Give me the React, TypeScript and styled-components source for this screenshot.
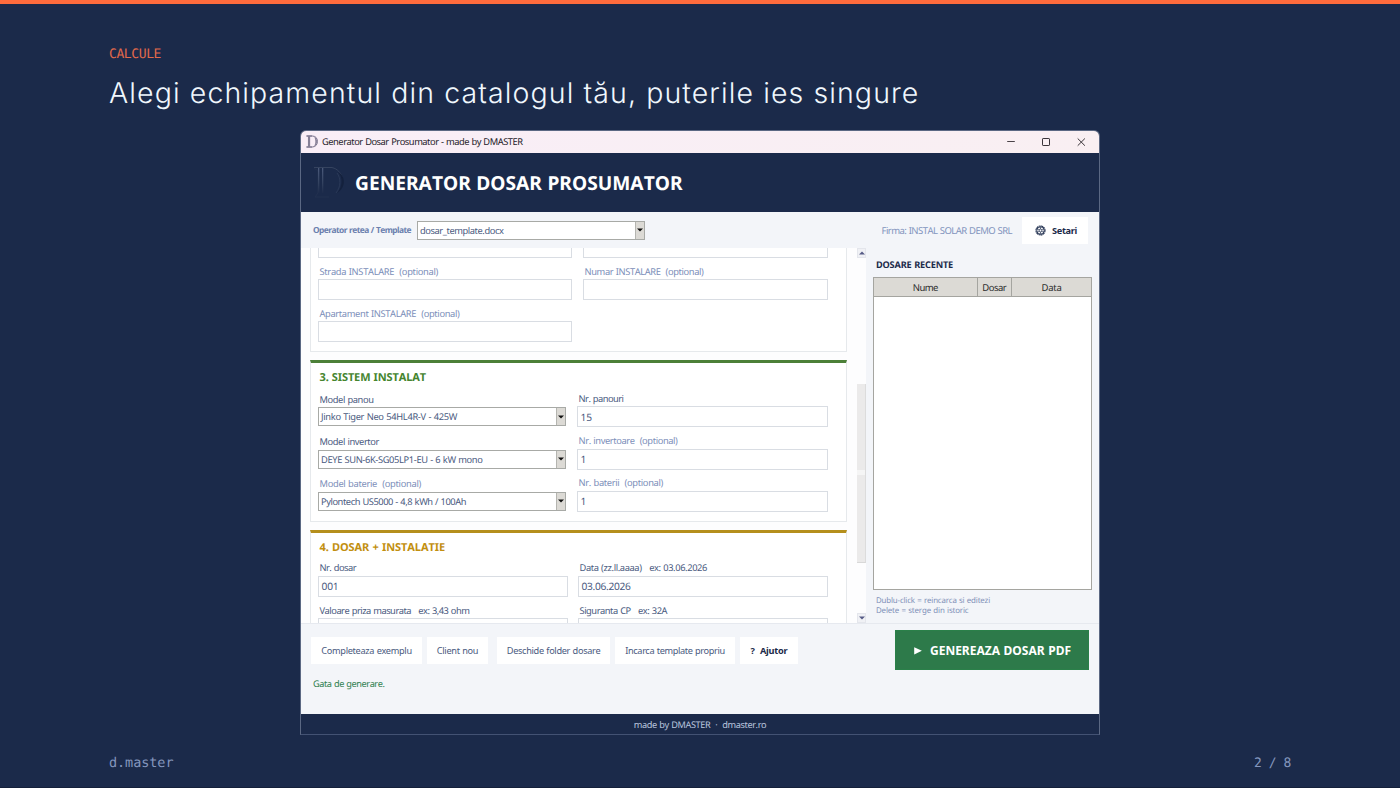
import React, { useLayoutEffect, useRef, useState } from "react";
import styled, { createGlobalStyle, css } from "styled-components";

const navy = "#1b2a4a";
const panel = "#f3f5f9";
const ink = "#4a5a80";
const muted = "#7b8eb9";

const GlobalStyle = createGlobalStyle`
  * { box-sizing: border-box; }
  body {
    margin: 0;
    background: ${navy};
    font-family: "Noto Sans", "Open Sans", sans-serif;
    text-rendering: geometricPrecision;
  }
`;

/* ---------- tracked text ---------- */

const TextSpan = styled.span`
  display: inline-block;
  white-space: pre;
  flex: none;
`;

/** Spreads or tightens the tracking so that the text spans `width` pixels. */
function Tracked({ width, children }: { width: number; children: string }) {
  const ref = useRef<HTMLSpanElement>(null);
  const [spacing, setSpacing] = useState(0);
  useLayoutEffect(() => {
    const el = ref.current;
    if (!el) return;
    el.style.letterSpacing = "0px";
    const natural = el.getBoundingClientRect().width;
    const next = (width - natural) / children.length;
    el.style.letterSpacing = `${next}px`;
    setSpacing(next);
  }, [width, children]);
  return (
    <TextSpan ref={ref} style={{ letterSpacing: `${spacing}px` }}>
      {children}
    </TextSpan>
  );
}

/* ---------- slide ---------- */

const Slide = styled.div`
  width: 1400px;
  height: 788px;
  overflow: hidden;
  display: flex;
  flex-direction: column;
  background: ${navy};
  border-top: 4px solid #ff6b3d;
  border-bottom: 1px solid #14203a;
`;

const SlideHead = styled.header`
  height: 126px;
  flex: none;
  padding: 43px 109px 0;
  display: flex;
  flex-direction: column;
`;

const Eyebrow = styled.div`
  height: 16px;
  line-height: 16px;
  font-family: "DejaVu Sans Mono", monospace;
  font-size: 13px;
  color: #e2694a;
`;

const Headline = styled.h1`
  margin: 12px 0 0;
  height: 36px;
  line-height: 36px;
  font-family: Inter, sans-serif;
  font-weight: 300;
  font-size: 28.5px;
  color: #f0f7fd;
`;

const SlideFoot = styled.footer`
  flex: 1;
  display: flex;
  justify-content: space-between;
  padding: 19px 109px 0 109px;
  font-family: "DejaVu Sans Mono", monospace;
  line-height: 19px;
  font-size: 13.5px;
  color: #8496bd;
`;

const PageNumber = styled.span`
  font-size: 13px;
`;

/* ---------- window ---------- */

const Window = styled.section`
  width: 800px;
  height: 605px;
  flex: none;
  margin-left: 300px;
  border: 1px solid #5b6883;
  border-bottom-color: #435273;
  border-radius: 6px 6px 0 0;
  overflow: hidden;
  display: flex;
  flex-direction: column;
  word-spacing: 0.03em;
  font-kerning: none;
`;

const TitleBar = styled.div`
  height: 22px;
  flex: none;
  display: flex;
  align-items: center;
  padding: 0 13px 1px 5px;
  background: linear-gradient(90deg, #f9eef7, #f9eff2);
  color: #252129;
  font-size: 9.3px;
`;

const TitleText = styled.div`
  flex: 1;
  padding-left: 4px;
`;

const WindowButtons = styled.div`
  display: flex;
  gap: 25px;
`;

const AppHeader = styled.div`
  height: 59px;
  flex: none;
  display: flex;
  align-items: center;
  gap: 8px;
  padding: 1px 12px 0;
  background: ${navy};
  color: #fff;
  font-weight: 700;
  font-size: 19.2px;
  line-height: 26px;
`;

const Toolbar = styled.div`
  height: 36px;
  flex: none;
  display: flex;
  align-items: center;
  padding: 0 11px 0 12px;
  background: ${panel};
`;

const ToolbarLabel = styled.label`
  width: 104px;
  padding-top: 1px;
  font-size: 8.4px;
  font-weight: 700;
  color: #6b80ae;
`;

const Company = styled.div`
  margin-left: auto;
  margin-right: 10px;
  font-size: 9.5px;
  color: #8294bd;
`;

const Button = styled.button<{ $width: number; $strong?: boolean }>`
  width: ${(p) => p.$width}px;
  height: 27px;
  flex: none;
  border: 0;
  padding: 0;
  display: flex;
  align-items: center;
  justify-content: center;
  gap: 6px;
  background: #fff;
  font-family: inherit;
  font-size: 9.2px;
  font-weight: ${(p) => (p.$strong ? 700 : 400)};
  word-spacing: inherit;
  color: ${(p) => (p.$strong ? navy : ink)};
`;

const SettingsButton = styled(Button)`
  padding-left: 2px;
`;

/* ---------- form ---------- */

const Body = styled.div`
  height: 376px;
  flex: none;
  display: flex;
  background: ${panel};
  border-bottom: 1px solid #e6e9ef;
`;

const FormViewport = styled.div`
  width: 556px;
  padding-left: 9px;
  overflow: hidden;
  background: #fdfdfe;
  display: flex;
  flex-direction: column;
`;

const Card = styled.section<{ $accent?: string; $height: number }>`
  width: 537px;
  height: ${(p) => p.$height}px;
  flex: none;
  padding: 0 18px 0 7px;
  margin-bottom: 8px;
  background: #fff;
  border: 1px solid #e6e9ec;
  ${(p) =>
    p.$accent
      ? css`
          border-top: 3px solid ${p.$accent};
        `
      : css`
          border-top: 0;
        `}
`;

const CardTitle = styled.h2<{ $color: string }>`
  margin: 0;
  padding: 7px 0 0 1.5px;
  height: 28px;
  line-height: 16px;
  font-size: 11px;
  font-weight: 700;
  color: ${(p) => p.$color};
`;

const FieldGrid = styled.div<{ $left: number; $gap: number }>`
  display: grid;
  grid-template-columns: ${(p) => p.$left}px 1fr;
  column-gap: ${(p) => p.$gap}px;
  grid-auto-rows: 42.3px;
`;

const Field = styled.div<{ $combo?: boolean }>`
  padding-top: ${(p) => (p.$combo ? 1 : 0)}px;
`;

const FieldLabel = styled.label<{ $optional?: boolean }>`
  display: flex;
  align-items: center;
  height: 15px;
  padding: 0 0 1px 1.5px;
  font-size: 9.3px;
  color: ${(p) => (p.$optional ? muted : ink)};
`;

const Input = styled.div`
  height: 21px;
  display: flex;
  align-items: center;
  padding-left: 2.5px;
  background: #fff;
  border: 1px solid #d9dde3;
  font-size: 10.2px;
  color: ${ink};
`;

const ComboBox = styled.div<{ $width?: number }>`
  width: ${(p) => (p.$width ? `${p.$width}px` : "auto")};
  height: 19px;
  display: flex;
  align-items: center;
  justify-content: space-between;
  padding-left: 2px;
  background: #fff;
  border: 1px solid #a8aaa6;
  font-size: 9.3px;
  color: ${ink};
`;

const ComboArrow = styled.span`
  width: 9px;
  height: 17px;
  display: flex;
  align-items: center;
  justify-content: center;
  background: #dcdad5;
  border-left: 1px solid #b5b5b0;
`;

/* ---------- scrollbar ---------- */

const ScrollColumn = styled.div`
  width: 9px;
  display: flex;
  flex-direction: column;
  background: #fdfdfe;
`;

const ScrollArrow = styled.div`
  height: 10px;
  display: flex;
  align-items: center;
  justify-content: center;
  background: #f0f1f5;
  border: 1px solid #e4e6ec;
`;

const ScrollTrack = styled.div`
  flex: 1;
  padding-top: 126px;
`;

const ScrollThumb = styled.div`
  height: 179px;
  background: linear-gradient(#ebeaea 0 86px, #f5f5f5 86px 91px, #ebeaea 91px);
  border-right: 1px solid #dcdcdc;
  border-bottom: 1px solid #d8d8d8;
`;

/* ---------- history ---------- */

const History = styled.aside`
  flex: 1;
  padding: 9px 7px 0 7px;
  display: flex;
  flex-direction: column;
`;

const HistoryTitle = styled.h3`
  margin: 0;
  height: 20px;
  padding-left: 3px;
  line-height: 16px;
  font-size: 9.2px;
  font-weight: 700;
  color: ${navy};
`;

const Table = styled.div`
  height: 313px;
  background: #fff;
  border: 1px solid #a5a5a0;
`;

const TableHead = styled.div`
  height: 19px;
  display: grid;
  grid-template-columns: 103.5px 34.5px 1fr;
  background: #dcdad5;
`;

const TableCell = styled.div`
  display: flex;
  align-items: center;
  justify-content: center;
  border: solid #a5a5a0;
  border-width: 0 1px 1px 0;
  font-size: 9.5px;
  color: #2b2b2b;

  &:last-child {
    border-right: 0;
  }
`;

const Hint = styled.p`
  margin: 5.6px 0 0 3px;
  display: flex;
  flex-direction: column;
  align-items: flex-start;
  font-size: 7.9px;
  line-height: 10.4px;
  color: #8090b8;
`;

/* ---------- action bar ---------- */

const ActionArea = styled.div`
  height: 90px;
  flex: none;
  background: ${panel};
  padding: 6px 10px 0 10px;
`;

const ActionRow = styled.div`
  height: 40px;
  display: flex;
  align-items: center;
`;

const ButtonGroup = styled.div`
  display: flex;
  gap: 5px;
  margin-right: 9px;
`;

const GenerateButton = styled.button`
  width: 194px;
  height: 40px;
  margin-left: auto;
  padding: 0 0 0 1px;
  border: 1px solid #2a8049;
  display: flex;
  align-items: center;
  justify-content: center;
  gap: 8px;
  background: #2d7a4a;
  color: #fff;
  font-family: inherit;
  font-size: 12px;
  font-weight: 700;
  word-spacing: inherit;
`;

const Status = styled.div`
  padding: 6px 0 0 2px;
  line-height: 16px;
  font-size: 9.2px;
  color: #2f8050;
`;

const AppFooter = styled.div`
  flex: 1;
  display: flex;
  align-items: center;
  justify-content: center;
  background: ${navy};
  font-size: 9.2px;
  color: #b9c5de;
`;

/* ---------- drawings ---------- */

const SmallLogo = () => (
  <svg width="12" height="13" viewBox="0 0 12 13">
    <path d="M0.5 1H6.2C9.6 1 11.4 3.2 11.4 6.4S9.6 12 6.2 12H0.5M0.5 1H6M0.5 12H6" stroke="#77718a" fill="none" strokeWidth="1" />
    <path d="M2.5 1V12M3.6 1V12" stroke="#857f96" strokeWidth="1.1" />
    <path d="M7.6 1.4C9.9 2.4 11.2 4.2 11.2 6.5S9.9 10.6 7.6 11.6C9 10.2 9.3 8.4 9.3 6.5S9 2.8 7.6 1.4Z" fill="#8b849b" />
  </svg>
);

const BigLogo = () => (
  <svg width="34" height="34" viewBox="0 0 34 34">
    <defs>
      <linearGradient id="stem" x1="0" y1="0" x2="0" y2="1">
        <stop offset="0" stopColor="#4b5a7b" />
        <stop offset="0.6" stopColor="#33425f" />
        <stop offset="1" stopColor="#1e2c4b" />
      </linearGradient>
    </defs>
    <path d="M1 1.5H19C25 3 27.5 7 29 11" stroke="#35435f" fill="none" />
    <path d="M1 2.5L5 4.5V27L2 31H16" stroke="#22304f" fill="none" />
    <rect x="5" y="2" width="1.3" height="25" fill="url(#stem)" />
    <rect x="9" y="2" width="1.3" height="25" fill="url(#stem)" />
    <path d="M25 6C30 11 30 21 24 27C33 22 33 10 25 6Z" fill="#14213d" />
    <path d="M24 7C28 12 28 21 23 27" stroke="#2a3958" fill="none" />
  </svg>
);

const MinimizeIcon = () => (
  <svg width="10" height="10" viewBox="0 0 10 10">
    <path d="M1.2 4.5H8.8" stroke="#4a4348" />
  </svg>
);

const MaximizeIcon = () => (
  <svg width="10" height="10" viewBox="0 0 10 10">
    <rect x="1.5" y="1.5" width="7" height="7" rx="0.6" fill="none" stroke="#3a3439" />
  </svg>
);

const CloseIcon = () => (
  <svg width="10" height="10" viewBox="0 0 10 10">
    <path d="M1.7 1.5L8.9 8.7M8.9 1.5L1.7 8.7" stroke="#3a3439" />
  </svg>
);

const GearIcon = () => (
  <svg width="11" height="11" viewBox="0 0 11 11">
    <circle cx="5.5" cy="5.5" r="4.5" fill="none" stroke={navy} strokeWidth="1.1" strokeDasharray="1.9 0.46" />
    <circle cx="5.5" cy="5.5" r="3.6" fill="none" stroke={navy} strokeWidth="0.8" />
    <circle cx="5.5" cy="5.5" r="1.4" fill="none" stroke={navy} strokeWidth="0.8" />
    <path d="M5.5 1.5V4M5.5 7V9.5M2 3.5L4.2 4.8M6.8 6.2L9 7.5M9 3.5L6.8 4.8M4.2 6.2L2 7.5" stroke={navy} strokeWidth="0.6" />
  </svg>
);

const DownTriangle = ({ color = "#111" }: { color?: string }) => (
  <svg width="6" height="4" viewBox="0 0 6 4">
    <path d="M0 0.4H6L3 3.6Z" fill={color} />
  </svg>
);

const UpTriangle = () => (
  <svg width="6" height="4" viewBox="0 0 6 4">
    <path d="M0 3.6H6L3 0.4Z" fill="#555a86" />
  </svg>
);

const PlayIcon = () => (
  <svg width="8" height="10" viewBox="0 0 8 10">
    <path d="M0.2 2.2L7.9 5.8L0.2 9.4Z" fill="#fff" />
  </svg>
);

/* ---------- form parts ---------- */

interface FieldProps {
  label: string;
  labelWidth: number;
  value?: string;
  valueWidth?: number;
  optional?: boolean;
}

function TextField({ label, labelWidth, value, valueWidth = 0, optional }: FieldProps) {
  return (
    <Field>
      <FieldLabel $optional={optional}>
        <Tracked width={labelWidth}>{label}</Tracked>
      </FieldLabel>
      <Input>{value && <Tracked width={valueWidth}>{value}</Tracked>}</Input>
    </Field>
  );
}

function ComboField({ label, labelWidth, value = "", valueWidth = 0, optional }: FieldProps) {
  return (
    <Field $combo>
      <FieldLabel $optional={optional}>
        <Tracked width={labelWidth}>{label}</Tracked>
      </FieldLabel>
      <ComboBox>
        <Tracked width={valueWidth}>{value}</Tracked>
        <ComboArrow>
          <DownTriangle />
        </ComboArrow>
      </ComboBox>
    </Field>
  );
}

const CutOffRow = styled.div`
  display: grid;
  grid-template-columns: 254px 1fr;
  column-gap: 11px;
  height: 16px;
`;

const CutOffInput = styled.div`
  height: 10px;
  border: 1px solid #d9dde3;
  border-top: 0;
`;

export default function App() {
  return (
    <>
      <GlobalStyle />
      <Slide>
        <SlideHead>
          <Eyebrow>
            <Tracked width={52}>CALCULE</Tracked>
          </Eyebrow>
          <Headline>
            <Tracked width={810.5}>Alegi echipamentul din catalogul tău, puterile ies singure</Tracked>
          </Headline>
        </SlideHead>

        <Window>
          <TitleBar>
            <SmallLogo />
            <TitleText>
              <Tracked width={200.5}>Generator Dosar Prosumator - made by DMASTER</Tracked>
            </TitleText>
            <WindowButtons>
              <MinimizeIcon />
              <MaximizeIcon />
              <CloseIcon />
            </WindowButtons>
          </TitleBar>

          <AppHeader>
            <BigLogo />
            <Tracked width={327.5}>GENERATOR DOSAR PROSUMATOR</Tracked>
          </AppHeader>

          <Toolbar>
            <ToolbarLabel>
              <Tracked width={98}>Operator retea / Template</Tracked>
            </ToolbarLabel>
            <ComboBox $width={228}>
              <Tracked width={83.5}>dosar_template.docx</Tracked>
              <ComboArrow>
                <DownTriangle />
              </ComboArrow>
            </ComboBox>
            <Company>
              <Tracked width={130.5}>Firma: INSTAL SOLAR DEMO SRL</Tracked>
            </Company>
            <SettingsButton $width={66} $strong>
              <GearIcon />
              <Tracked width={25}>Setari</Tracked>
            </SettingsButton>
          </Toolbar>

          <Body>
            <FormViewport>
              <Card $height={104.4}>
                <CutOffRow>
                  <CutOffInput />
                  <CutOffInput />
                </CutOffRow>
                <FieldGrid $left={254} $gap={11}>
                  <TextField optional label="Strada INSTALARE  (optional)" labelWidth={118.5} />
                  <TextField optional label="Numar INSTALARE  (optional)" labelWidth={119} />
                  <TextField optional label="Apartament INSTALARE  (optional)" labelWidth={140} />
                </FieldGrid>
              </Card>

              <Card $accent="#4c8038" $height={161.4}>
                <CardTitle $color="#45852e">
                  <Tracked width={106.5}>3. SISTEM INSTALAT</Tracked>
                </CardTitle>
                <FieldGrid $left={248} $gap={11}>
                  <ComboField label="Model panou" labelWidth={54} value="Jinko Tiger Neo 54HL4R-V - 425W" valueWidth={136} />
                  <TextField label="Nr. panouri" labelWidth={45} value="15" valueWidth={11.5} />
                  <ComboField label="Model invertor" labelWidth={59.5} value="DEYE SUN-6K-SG05LP1-EU - 6 kW mono" valueWidth={161.5} />
                  <TextField optional label="Nr. invertoare  (optional)" labelWidth={99} value="1" valueWidth={6} />
                  <ComboField optional label="Model baterie  (optional)" labelWidth={101.5} value="Pylontech US5000 - 4,8 kWh / 100Ah" valueWidth={145} />
                  <TextField optional label="Nr. baterii  (optional)" labelWidth={84.5} value="1" valueWidth={6} />
                </FieldGrid>
              </Card>

              <Card $accent="#b58f1c" $height={162}>
                <CardTitle $color="#c28f10">
                  <Tracked width={125.5}>4. DOSAR + INSTALATIE</Tracked>
                </CardTitle>
                <FieldGrid $left={250} $gap={10}>
                  <TextField label="Nr. dosar" labelWidth={36.5} value="001" valueWidth={17} />
                  <TextField label="Data (zz.ll.aaaa)   ex: 03.06.2026" labelWidth={127.5} value="03.06.2026" valueWidth={49} />
                  <TextField label="Valoare priza masurata   ex: 3,43 ohm" labelWidth={150} />
                  <TextField label="Siguranta CP   ex: 32A" labelWidth={87.5} />
                </FieldGrid>
              </Card>
            </FormViewport>

            <ScrollColumn>
              <ScrollArrow>
                <UpTriangle />
              </ScrollArrow>
              <ScrollTrack>
                <ScrollThumb />
              </ScrollTrack>
              <ScrollArrow>
                <DownTriangle color="#555a86" />
              </ScrollArrow>
            </ScrollColumn>

            <History>
              <HistoryTitle>
                <Tracked width={77}>DOSARE RECENTE</Tracked>
              </HistoryTitle>
              <Table>
                <TableHead>
                  <TableCell>
                    <Tracked width={25}>Nume</Tracked>
                  </TableCell>
                  <TableCell>
                    <Tracked width={24}>Dosar</Tracked>
                  </TableCell>
                  <TableCell>
                    <Tracked width={20}>Data</Tracked>
                  </TableCell>
                </TableHead>
              </Table>
              <Hint>
                <Tracked width={114}>Dublu-click = reincarca si editezi</Tracked>
                <Tracked width={92.5}>Delete = sterge din istoric</Tracked>
              </Hint>
            </History>
          </Body>

          <ActionArea>
            <ActionRow>
              <ButtonGroup>
                <Button $width={111}>
                  <Tracked width={90.5}>Completeaza exemplu</Tracked>
                </Button>
                <Button $width={61}>
                  <Tracked width={41.5}>Client nou</Tracked>
                </Button>
              </ButtonGroup>
              <ButtonGroup>
                <Button $width={113}>
                  <Tracked width={93.5}>Deschide folder dosare</Tracked>
                </Button>
                <Button $width={120}>
                  <Tracked width={99.5}>Incarca template propriu</Tracked>
                </Button>
                <Button $width={58} $strong>
                  <Tracked width={37}>?  Ajutor</Tracked>
                </Button>
              </ButtonGroup>
              <GenerateButton>
                <PlayIcon />
                <Tracked width={141}>GENEREAZA DOSAR PDF</Tracked>
              </GenerateButton>
            </ActionRow>
            <Status>
              <Tracked width={71.5}>Gata de generare.</Tracked>
            </Status>
          </ActionArea>

          <AppFooter>
            <Tracked width={132.5}>made by DMASTER  ·  dmaster.ro</Tracked>
          </AppFooter>
        </Window>

        <SlideFoot>
          <Tracked width={64.5}>d.master</Tracked>
          <PageNumber>
            <Tracked width={37}>2 / 8</Tracked>
          </PageNumber>
        </SlideFoot>
      </Slide>
    </>
  );
}
